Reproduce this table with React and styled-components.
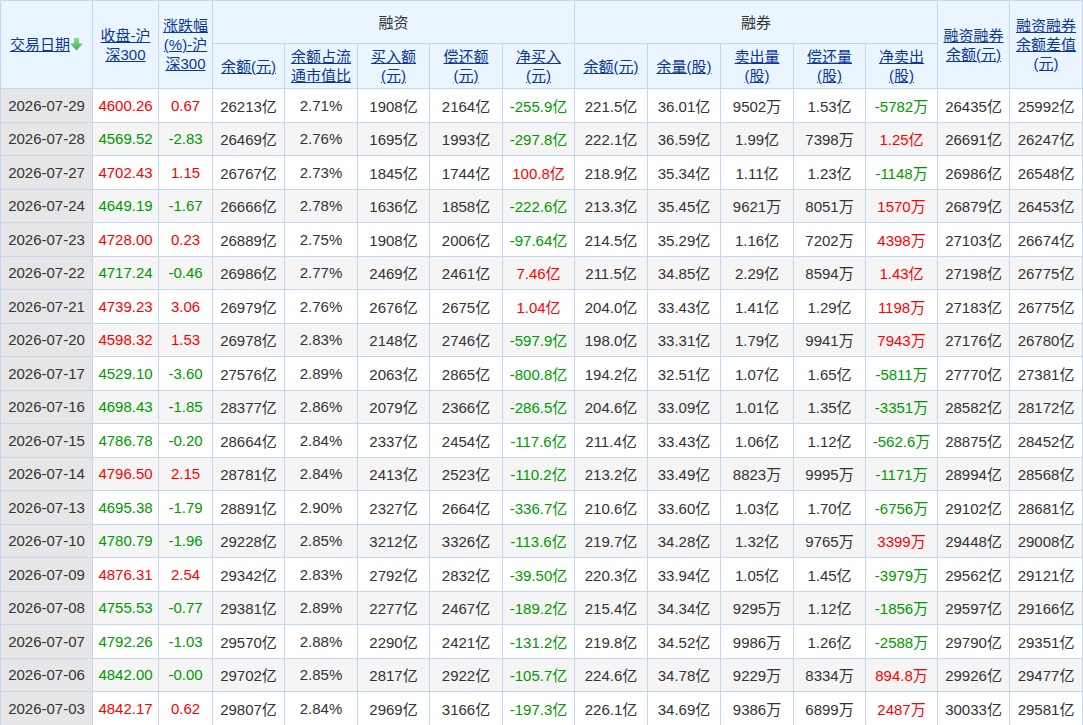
import React from 'react';
import styled, { createGlobalStyle } from 'styled-components';

const GlobalStyle = createGlobalStyle`
  html, body {
    margin: 0;
    padding: 0;
    background: #fff;
  }
  body {
    font-family: "Liberation Sans", Arial, "Noto Sans CJK SC", sans-serif;
    font-size: 15px;
    color: #333;
  }
`;

const Page = styled.div`
  width: 1083px;
  overflow: hidden;
`;

const Table = styled.table`
  width: 1082px;
  table-layout: fixed;
  border-collapse: collapse;
  font-size: 15px;
`;

const HeadCell = styled.th`
  background: #eaf5ff;
  border: 1px solid #c3d8ee;
  font-weight: normal;
  color: #333;
  text-align: center;
  vertical-align: middle;
  padding: 0 2px;
  white-space: nowrap;
  line-height: 19px;
`;

const HeadRow = styled.tr`
  height: ${p => p.$h}px;
`;

const SortLink = styled.a`
  color: #0a3897;
  text-decoration: underline;
  cursor: pointer;
`;

const Row = styled.tr`
  height: 33.5px;
  background: ${p => (p.$odd ? '#f5f5f5' : '#fff')};
`;

const Cell = styled.td`
  border: 1px solid #c3d8ee;
  text-align: center;
  vertical-align: middle;
  padding: 0 2px;
  white-space: nowrap;
  color: ${p => p.$color || '#333'};
`;

const DateCell = styled(Cell)`
  background: #e6e6e6;
`;

const SortArrow = () => (
  <svg width="13" height="13" viewBox="0 0 13 13" style={{ verticalAlign: '-1px' }}>
    <defs>
      <linearGradient id="ga" x1="0" y1="0" x2="0" y2="1">
        <stop offset="0" stopColor="#8fdc8f" />
        <stop offset="1" stopColor="#3fb04f" />
      </linearGradient>
    </defs>
    <polygon points="4,0 9,0 9,5.5 13,5.5 6.5,12.5 0,5.5 4,5.5" fill="url(#ga)" />
  </svg>
);

const widths = [92, 66, 54, 72, 73, 72, 73, 72, 73, 73, 73, 72, 72, 72, 73];

const rows = [
  ['2026-07-29', '4600.26', '0.67', '26213亿', '2.71%', '1908亿', '2164亿', '-255.9亿', '221.5亿', '36.01亿', '9502万', '1.53亿', '-5782万', '26435亿', '25992亿'],
  ['2026-07-28', '4569.52', '-2.83', '26469亿', '2.76%', '1695亿', '1993亿', '-297.8亿', '222.1亿', '36.59亿', '1.99亿', '7398万', '1.25亿', '26691亿', '26247亿'],
  ['2026-07-27', '4702.43', '1.15', '26767亿', '2.73%', '1845亿', '1744亿', '100.8亿', '218.9亿', '35.34亿', '1.11亿', '1.23亿', '-1148万', '26986亿', '26548亿'],
  ['2026-07-24', '4649.19', '-1.67', '26666亿', '2.78%', '1636亿', '1858亿', '-222.6亿', '213.3亿', '35.45亿', '9621万', '8051万', '1570万', '26879亿', '26453亿'],
  ['2026-07-23', '4728.00', '0.23', '26889亿', '2.75%', '1908亿', '2006亿', '-97.64亿', '214.5亿', '35.29亿', '1.16亿', '7202万', '4398万', '27103亿', '26674亿'],
  ['2026-07-22', '4717.24', '-0.46', '26986亿', '2.77%', '2469亿', '2461亿', '7.46亿', '211.5亿', '34.85亿', '2.29亿', '8594万', '1.43亿', '27198亿', '26775亿'],
  ['2026-07-21', '4739.23', '3.06', '26979亿', '2.76%', '2676亿', '2675亿', '1.04亿', '204.0亿', '33.43亿', '1.41亿', '1.29亿', '1198万', '27183亿', '26775亿'],
  ['2026-07-20', '4598.32', '1.53', '26978亿', '2.83%', '2148亿', '2746亿', '-597.9亿', '198.0亿', '33.31亿', '1.79亿', '9941万', '7943万', '27176亿', '26780亿'],
  ['2026-07-17', '4529.10', '-3.60', '27576亿', '2.89%', '2063亿', '2865亿', '-800.8亿', '194.2亿', '32.51亿', '1.07亿', '1.65亿', '-5811万', '27770亿', '27381亿'],
  ['2026-07-16', '4698.43', '-1.85', '28377亿', '2.86%', '2079亿', '2366亿', '-286.5亿', '204.6亿', '33.09亿', '1.01亿', '1.35亿', '-3351万', '28582亿', '28172亿'],
  ['2026-07-15', '4786.78', '-0.20', '28664亿', '2.84%', '2337亿', '2454亿', '-117.6亿', '211.4亿', '33.43亿', '1.06亿', '1.12亿', '-562.6万', '28875亿', '28452亿'],
  ['2026-07-14', '4796.50', '2.15', '28781亿', '2.84%', '2413亿', '2523亿', '-110.2亿', '213.2亿', '33.49亿', '8823万', '9995万', '-1171万', '28994亿', '28568亿'],
  ['2026-07-13', '4695.38', '-1.79', '28891亿', '2.90%', '2327亿', '2664亿', '-336.7亿', '210.6亿', '33.60亿', '1.03亿', '1.70亿', '-6756万', '29102亿', '28681亿'],
  ['2026-07-10', '4780.79', '-1.96', '29228亿', '2.85%', '3212亿', '3326亿', '-113.6亿', '219.7亿', '34.28亿', '1.32亿', '9765万', '3399万', '29448亿', '29008亿'],
  ['2026-07-09', '4876.31', '2.54', '29342亿', '2.83%', '2792亿', '2832亿', '-39.50亿', '220.3亿', '33.94亿', '1.05亿', '1.45亿', '-3979万', '29562亿', '29121亿'],
  ['2026-07-08', '4755.53', '-0.77', '29381亿', '2.89%', '2277亿', '2467亿', '-189.2亿', '215.4亿', '34.34亿', '9295万', '1.12亿', '-1856万', '29597亿', '29166亿'],
  ['2026-07-07', '4792.26', '-1.03', '29570亿', '2.88%', '2290亿', '2421亿', '-131.2亿', '219.8亿', '34.52亿', '9986万', '1.26亿', '-2588万', '29790亿', '29351亿'],
  ['2026-07-06', '4842.00', '-0.00', '29702亿', '2.85%', '2817亿', '2922亿', '-105.7亿', '224.6亿', '34.78亿', '9229万', '8334万', '894.8万', '29926亿', '29477亿'],
  ['2026-07-03', '4842.17', '0.62', '29807亿', '2.84%', '2969亿', '3166亿', '-197.3亿', '226.1亿', '34.69亿', '9386万', '6899万', '2487万', '30033亿', '29581亿'],
];

const RED = '#ff0000';
const GREEN = '#009900';
const signColor = v => (v.startsWith('-') ? GREEN : RED);

// close & change follow the change sign; net buy / net sell follow their own sign
const colorFor = (row, i) => {
  if (i === 1 || i === 2) return signColor(row[2]);
  if (i === 7 || i === 12) return signColor(row[i]);
  return null;
};

const Lines = ({ lines }) =>
  lines.map((l, i) => (
    <React.Fragment key={i}>
      {i > 0 && <br />}
      {l}
    </React.Fragment>
  ));

const subHeads = [
  ['余额(元)'],
  ['余额占流', '通市值比'],
  ['买入额', '(元)'],
  ['偿还额', '(元)'],
  ['净买入', '(元)'],
  ['余额(元)'],
  ['余量(股)'],
  ['卖出量', '(股)'],
  ['偿还量', '(股)'],
  ['净卖出', '(股)'],
];

export default function App() {
  return (
    <Page>
      <GlobalStyle />
      <Table>
        <colgroup>
          {widths.map((w, i) => (
            <col key={i} style={{ width: w }} />
          ))}
        </colgroup>
        <thead>
          <HeadRow $h={43}>
            <HeadCell rowSpan={2}>
              <SortLink>交易日期</SortLink>
              <SortArrow />
            </HeadCell>
            <HeadCell rowSpan={2}>
              <SortLink><Lines lines={['收盘-沪', '深300']} /></SortLink>
            </HeadCell>
            <HeadCell rowSpan={2}>
              <SortLink><Lines lines={['涨跌幅', '(%)-沪', '深300']} /></SortLink>
            </HeadCell>
            <HeadCell colSpan={5}>融资</HeadCell>
            <HeadCell colSpan={5}>融券</HeadCell>
            <HeadCell rowSpan={2}>
              <SortLink><Lines lines={['融资融券', '余额(元)']} /></SortLink>
            </HeadCell>
            <HeadCell rowSpan={2}>
              <SortLink><Lines lines={['融资融券', '余额差值', '(元)']} /></SortLink>
            </HeadCell>
          </HeadRow>
          <HeadRow $h={45}>
            {subHeads.map((h, i) => (
              <HeadCell key={i}>
                <SortLink><Lines lines={h} /></SortLink>
              </HeadCell>
            ))}
          </HeadRow>
        </thead>
        <tbody>
          {rows.map((r, ri) => (
            <Row key={r[0]} $odd={ri % 2 === 1}>
              <DateCell>{r[0]}</DateCell>
              {r.slice(1).map((v, ci) => (
                <Cell key={ci} $color={colorFor(r, ci + 1)}>{v}</Cell>
              ))}
            </Row>
          ))}
        </tbody>
      </Table>
    </Page>
  );
}
